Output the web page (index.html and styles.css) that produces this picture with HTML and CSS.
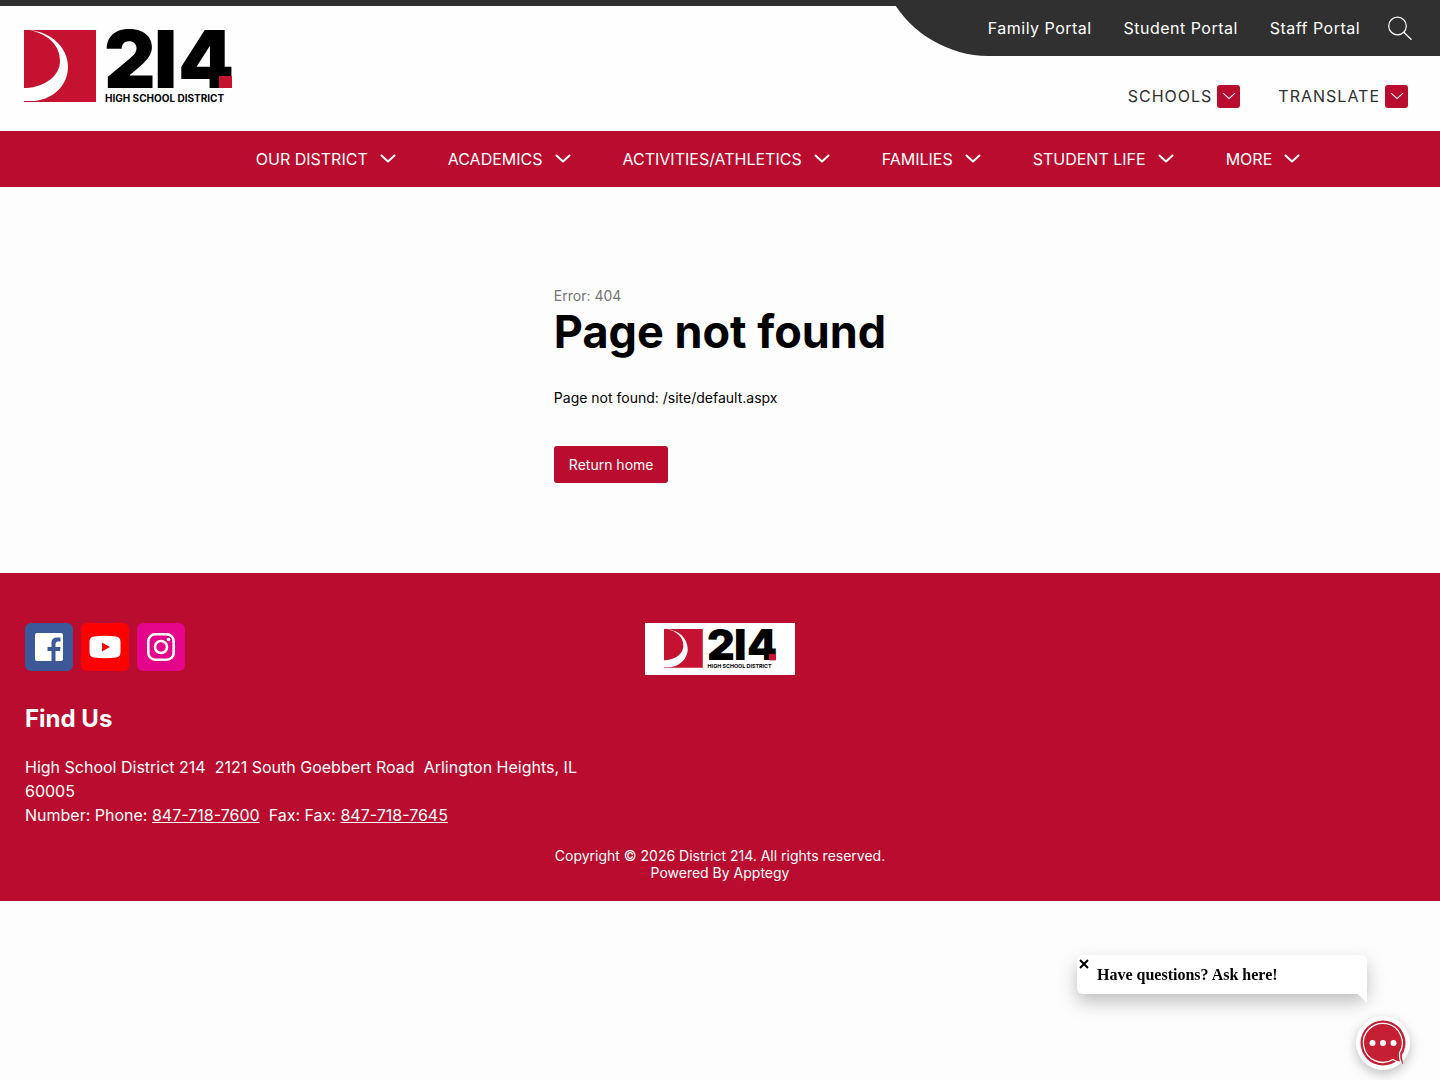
FILE: index.html
```html
<!DOCTYPE html>
<html lang="en">
<head>
<meta charset="utf-8">
<meta name="viewport" content="width=device-width, initial-scale=1">
<title>Page not found | District 214</title>
<link rel="stylesheet" href="styles.css">
</head>
<body>
<svg class="defs" aria-hidden="true">
  <symbol id="chevron" viewBox="0 0 16 10"><path d="M1.5 1.5 8 7.500 14.500 1.500" fill="none" stroke="currentColor" stroke-linecap="round" stroke-linejoin="round"/></symbol>
  <symbol id="logo" viewBox="0 0 208 74" overflow="visible">
    <path fill="#c41230" d="M0 0H72V72H0Z"/>
    <path fill="#fff" d="M5 0C28 2 44 18 44 37C44 57 26 72 5 71H0V58H2C22 57 36 45 36 31C36 15 24 4 5 0Z"/>
    <text class="logo-number" x="80 130 154" y="58">2I4</text>
    <path fill="#c41230" d="M195 46H208V58H195Z"/>
    <text class="logo-name" x="81" y="72">HIGH SCHOOL DISTRICT</text>
  </symbol>
</svg>

<header class="header">
  <div class="top">
    <a class="brand" href="#" aria-label="District 214 home"><svg class="logo" width="208" height="74"><use href="#logo"/></svg></a>
    <div class="tools">
      <div class="portal-bar">
        <svg class="curve" viewBox="0 0 100 56" width="100" height="56" aria-hidden="true"><path d="M4 0A113 113 0 0 0 100 56V0Z" fill="#303030"/></svg>
        <nav class="portals" aria-label="Portals">
          <a href="#">Family Portal</a>
          <a href="#">Student Portal</a>
          <a href="#">Staff Portal</a>
          <button class="search" type="button" aria-label="Search"><svg viewBox="0 0 24 24" width="24" height="24"><g fill="none" stroke="#fff" stroke-width="1.200"><circle cx="9.500" cy="10" r="8.800"/><path d="M15.800 16.300 23.500 23.800"/></g></svg></button>
        </nav>
      </div>
      <div class="selectors">
        <button class="selector" type="button">SCHOOLS <span class="box"><svg width="14" height="9"><use href="#chevron"/></svg></span></button>
        <button class="selector" type="button">TRANSLATE <span class="box"><svg width="14" height="9"><use href="#chevron"/></svg></span></button>
      </div>
    </div>
  </div>
  <nav class="menu" aria-label="Main">
    <button type="button">OUR DISTRICT <svg width="16" height="10"><use href="#chevron"/></svg></button>
    <button type="button">ACADEMICS <svg width="16" height="10"><use href="#chevron"/></svg></button>
    <button type="button">ACTIVITIES/ATHLETICS <svg width="16" height="10"><use href="#chevron"/></svg></button>
    <button type="button">FAMILIES <svg width="16" height="10"><use href="#chevron"/></svg></button>
    <button type="button">STUDENT LIFE <svg width="16" height="10"><use href="#chevron"/></svg></button>
    <button type="button">MORE <svg width="16" height="10"><use href="#chevron"/></svg></button>
  </nav>
</header>

<main class="main">
  <div class="error">
    <p class="code">Error: 404</p>
    <h1>Page not found</h1>
    <p class="detail">Page not found: /site/default.aspx</p>
    <a class="home" href="#">Return home</a>
  </div>
</main>

<footer class="footer">
  <div class="columns">
    <div class="contact">
      <div class="social">
        <a class="facebook" href="#" aria-label="Facebook"><svg viewBox="0 0 48 48" width="48" height="48"><path fill="#fff" d="M12 10H36Q38 10 38 12V36Q38 38 36 38H30.500V28H35L35.500 24H30.500V21Q30.500 18.500 33 18.500H35.500V14.500H32Q26.500 14.500 26.500 20V24H22.500V28H26.500V38H12Q10 38 10 36V12Q10 10 12 10Z"/></svg></a>
        <a class="youtube" href="#" aria-label="YouTube"><svg viewBox="0 0 48 48" width="48" height="48"><path fill="#fff" d="M13 13.500Q24 12 35 13.500Q39.500 14 39.500 19V29Q39.500 34 35 34.500Q24 36 13 34.500Q8.500 34 8.500 29V19Q8.500 14 13 13.500Z"/><path fill="red" d="M21 19.500V28.500L29 24Z"/></svg></a>
        <a class="instagram" href="#" aria-label="Instagram"><svg viewBox="0 0 48 48" width="48" height="48"><g fill="none" stroke="#fff" stroke-width="2.600"><rect x="11.300" y="11.300" width="25.400" height="25.400" rx="7"/><circle cx="24" cy="24" r="6"/></g><circle cx="31.500" cy="16.500" r="1.800" fill="#fff"/></svg></a>
      </div>
      <h2>Find Us</h2>
      <p class="address">High School District 214&nbsp; 2121 South Goebbert Road&nbsp; Arlington Heights, IL 60005<br>Number: Phone: <a href="#">847-718-7600</a>&nbsp; Fax: Fax: <a href="#">847-718-7645</a></p>
    </div>
    <a class="footer-brand" href="#" aria-label="District 214"><svg width="112" height="40"><use href="#logo"/></svg></a>
  </div>
  <p class="legal">Copyright © 2026 District 214. All rights reserved.<br>Powered By Apptegy</p>
</footer>

<aside class="chat">
  <div class="bubble">
    <button class="close" type="button" aria-label="Close"><svg viewBox="0 0 10 10" width="10" height="10"><path d="M1 1 9 9M9 1 1 9" stroke="#000" stroke-width="2"/></svg></button>
    <p>Have questions? Ask here!</p>
    <svg class="tail" viewBox="0 0 12 12" width="12" height="12" aria-hidden="true"><path d="M0 0H12V12Z" fill="#fff"/></svg>
  </div>
  <button class="launcher" type="button" aria-label="Open chat"><svg viewBox="0 0 46 46" width="46" height="46"><circle cx="23" cy="23" r="22.500" fill="#c41f33"/><path fill="#c41f33" d="M32 38 43 44 41 30Z"/><path d="M39.500 33A19.500 19.500 0 1 0 33 39.500Q37 42 41 42.500Q39 38 39.500 33Z" fill="none" stroke="#fff" stroke-width="1.300"/><g fill="#fff"><circle cx="12.500" cy="23" r="3"/><circle cx="23" cy="23" r="3"/><circle cx="33.500" cy="23" r="3"/></g></svg></button>
</aside>
</body>
</html>
```
FILE: styles.css
```css
* { box-sizing: border-box; }
body { margin: 0; background: #fdfdfd; color: #000; font-family: Inter, "Liberation Sans", sans-serif; font-size: 16px; line-height: 24px; }
h1, h2, p { margin: 0; }
a { color: inherit; text-decoration: none; }
button { border: 0; padding: 0; background: none; color: inherit; font: inherit; cursor: pointer; }
svg { display: block; flex: none; overflow: visible; }
.defs { position: absolute; width: 0; height: 0; }
.logo-number { font-family: Inter, sans-serif; font-weight: 900; font-size: 80px; }
.logo-name { font-family: Inter, sans-serif; font-weight: 700; font-size: 10px; }

.top { display: flex; justify-content: space-between; min-height: 131px; border-top: 6px solid #303030; background: #fefefe; }
.brand { padding: 24px; }
.tools { display: flex; flex-direction: column; align-items: flex-end; margin-top: -6px; }
.portal-bar { display: flex; }
.portals { display: flex; align-items: center; gap: 32px; height: 56px; padding-right: 28px; background: #303030; color: #fff; letter-spacing: 0.03em; }
.search { margin-left: -4px; }
.selectors { display: flex; gap: 38px; padding: 28px 32px 0 0; color: #303030; letter-spacing: 1px; }
.selector { display: flex; align-items: center; gap: 5px; letter-spacing: inherit; }
.box { display: grid; place-items: center; width: 23px; height: 23px; border-radius: 3px; background: #b90c2e; color: #fff; stroke-width: 1.2; }

.menu { display: flex; justify-content: center; gap: 52px; min-height: 56px; padding-left: 116px; background: #b90c2e; color: #fff; stroke-width: 2; }
.menu button { display: flex; align-items: center; gap: 12px; }

.main { display: flex; justify-content: center; padding: 100px 24px 90px; }
.error { font-size: 14px; line-height: 18px; }
.code { color: #757575; }
.error h1 { font-size: 45px; line-height: 54px; }
.detail { padding: 30px 0 39px; }
.home { display: inline-block; padding: 10px 15px 9px; border-radius: 3px; background: #b90c2e; color: #fff; }

.footer { padding: 50px 25px 20px; background: #b90c2e; color: #fff; }
.columns { display: grid; grid-template-columns: 1fr 150px 1fr; gap: 50px; align-items: start; }
.social { display: flex; gap: 8px; }
.social a { border-radius: 6px; }
.facebook { background: #3b5998; }
.youtube { background: #f00; }
.instagram { background: #e4058a; }
.contact h2 { padding: 32px 0 20px; font-size: 24px; line-height: 32px; }
.address a { text-decoration: underline; }
.footer-brand { display: grid; place-items: center; height: 52px; background: #fff; color: #000; }
.legal { padding-top: 20px; text-align: center; font-size: 14px; line-height: 17px; }

.chat { position: fixed; right: 30px; bottom: 10px; display: flex; flex-direction: column; align-items: flex-end; gap: 22px; }
.bubble { position: relative; width: 290px; height: 39px; margin-right: 43px; padding: 8px 20px; border-radius: 6px; background: #fff; box-shadow: 0 8px 18px rgb(0 0 0 / 25%); font-family: "Liberation Serif", serif; font-weight: 700; }
.close { position: absolute; top: 4px; left: 2px; }
.tail { position: absolute; right: 0; top: 36px; }
.launcher { display: grid; place-items: center; width: 54px; height: 54px; border-radius: 50%; background: #fff; box-shadow: 0 4px 12px rgb(0 0 0 / 25%); }
```
